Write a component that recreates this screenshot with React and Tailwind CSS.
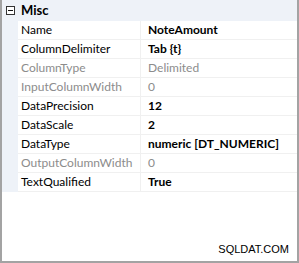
const rows = [
  { name: 'Name', value: 'NoteAmount', bold: true },
  { name: 'ColumnDelimiter', value: 'Tab {t}', bold: true },
  { name: 'ColumnType', value: 'Delimited', muted: true },
  { name: 'InputColumnWidth', value: '0', muted: true },
  { name: 'DataPrecision', value: '12', bold: true },
  { name: 'DataScale', value: '2', bold: true },
  { name: 'DataType', value: 'numeric [DT_NUMERIC]', bold: true },
  { name: 'OutputColumnWidth', value: '0', muted: true },
  { name: 'TextQualified', value: 'True', bold: true },
]

export default function App() {
  return (
    <div
      className="w-[299px] h-[263px] bg-white border-x-2 border-b-2 border-[#a3a3a3] relative overflow-hidden text-[12px] leading-none"
      style={{ fontFamily: 'Lato, "Noto Sans", sans-serif' }}
    >
      <div className="flex h-[21px] bg-[#eef2f8] items-center">
        <div className="w-[16px] flex items-center justify-center">
          <div className="w-[9px] h-[9px] border border-[#333] bg-white flex items-center justify-center">
            <div className="w-[5px] h-px bg-[#111]" />
          </div>
        </div>
        <span className="font-bold text-black pl-[3px] text-[13px]">Misc</span>
      </div>
      <div className="flex">
        <div className="w-[16px] bg-[#eef2f8]" />
        <div className="flex-1">
          {rows.map(r => (
            <div key={r.name} className="flex h-[19px] items-center border-b border-[#f0f0f0]">
              <div className={`w-[123px] pl-[3px] border-r border-[#f0f0f0] h-full flex items-center ${r.muted ? 'text-[#8c8c8c]' : 'text-black'}`}>
                {r.name}
              </div>
              <div className={`pl-[7px] ${r.muted ? 'text-[#8c8c8c]' : 'text-black font-bold'}`}>
                {r.value}
              </div>
            </div>
          ))}
        </div>
      </div>
      <div
        className="absolute right-[8px] bottom-[6px] text-[11px] text-black"
        style={{ fontFamily: '"Liberation Sans", Arial, sans-serif' }}
      >
        SQLDAT.COM
      </div>
    </div>
  )
}
